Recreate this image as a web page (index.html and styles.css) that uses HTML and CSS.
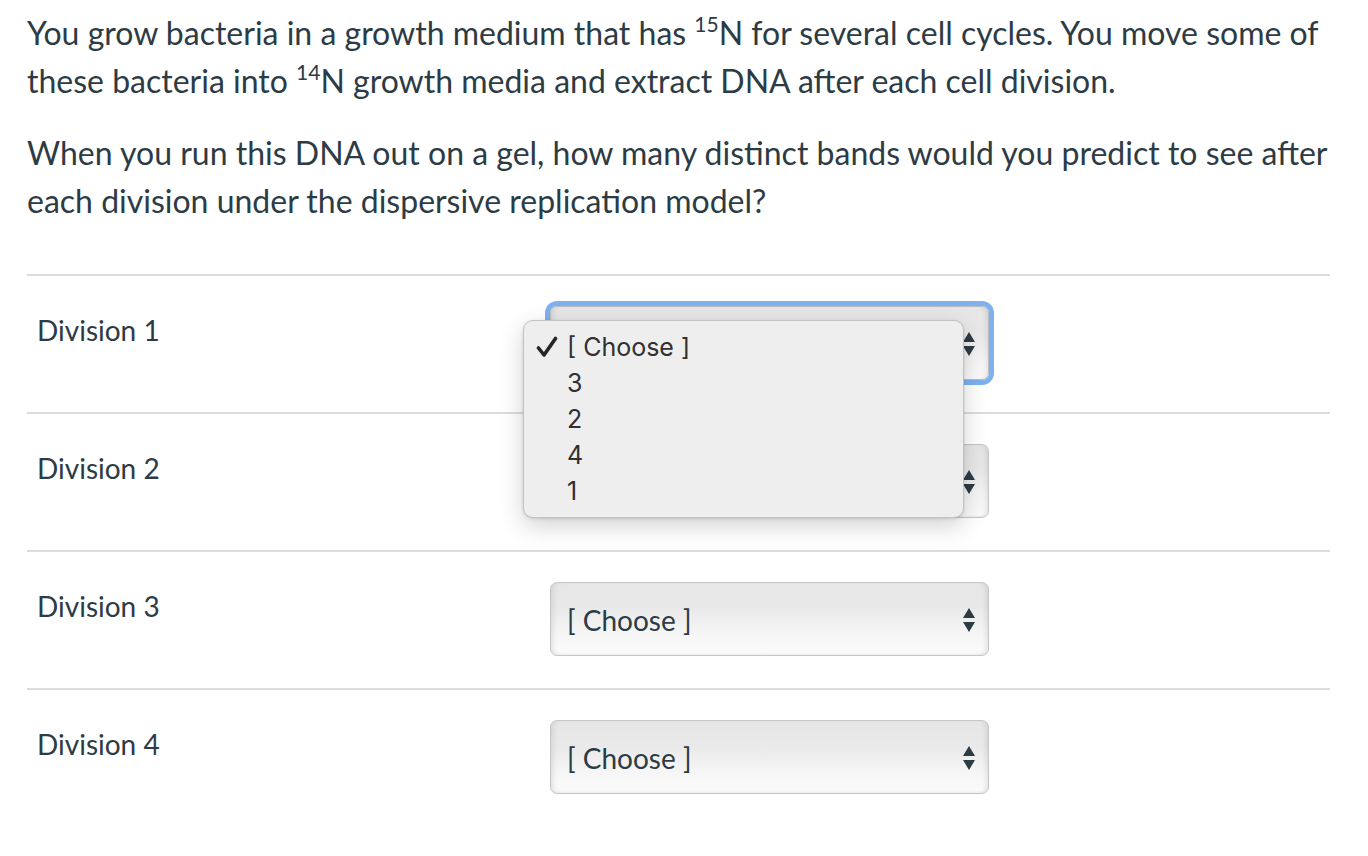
FILE: index.html
```html
<!DOCTYPE html>
<html lang="en">
  <head>
    <meta charset="UTF-8" />
    <meta name="viewport" content="width=device-width, initial-scale=1.0" />
    <title>Question</title>
    <link rel="stylesheet" href="styles.css">
  </head>
  <body>
    <div class="question">
      <div class="question-text">
        <p>
          You grow bacteria in a growth medium that has <sup>15</sup>N for several cell cycles. You move some of
          these bacteria into <sup>14</sup>N growth media and extract DNA after each cell division.
        </p>
        <p>
          When you run this DNA out on a gel, how many distinct bands would you predict to see after
          each division under the dispersive replication model?
        </p>
      </div>

      <div class="answers">
        <div class="answer-row">
          <div class="answer-label">Division 1</div>
          <div class="answer-field">
            <div class="select focused">
              <span class="select-value">[ Choose ]</span>
              <span class="select-arrows"><i class="up"></i><i class="down"></i></span>
            </div>
            <!-- open option list of the first select -->
            <ul class="popup">
              <li class="checked">
                <svg class="check" viewBox="0 0 22 22" width="22" height="22">
                  <path d="M2.5 12 L8 19 L19.5 2.5" fill="none" stroke="#262626" stroke-width="3.6" stroke-linecap="round" stroke-linejoin="round" />
                </svg>
                [ Choose ]
              </li>
              <li>3</li>
              <li>2</li>
              <li>4</li>
              <li>1</li>
            </ul>
          </div>
        </div>

        <div class="answer-row">
          <div class="answer-label">Division 2</div>
          <div class="answer-field">
            <div class="select">
              <span class="select-value">[ Choose ]</span>
              <span class="select-arrows"><i class="up"></i><i class="down"></i></span>
            </div>
          </div>
        </div>

        <div class="answer-row">
          <div class="answer-label">Division 3</div>
          <div class="answer-field">
            <div class="select">
              <span class="select-value">[ Choose ]</span>
              <span class="select-arrows"><i class="up"></i><i class="down"></i></span>
            </div>
          </div>
        </div>

        <div class="answer-row">
          <div class="answer-label">Division 4</div>
          <div class="answer-field">
            <div class="select">
              <span class="select-value">[ Choose ]</span>
              <span class="select-arrows"><i class="up"></i><i class="down"></i></span>
            </div>
          </div>
        </div>
      </div>
    </div>
  </body>
</html>
```

FILE: styles.css
```css
body {
  margin: 0;
  padding: 0;
  background: #fff;
  color: #2d3b45;
  font-family: "Lato", "Liberation Sans", sans-serif;
}

.question {
  padding: 9px 38px 0 27px;
}

.question-text {
  margin-right: -12px;
}

.question-text p {
  margin: 0 0 24px;
  font-size: 32px;
  line-height: 48px;
}

.question-text sup {
  font-size: 21px;
  line-height: 1;
  vertical-align: 0;
  position: relative;
  top: -13px;
}

.answers {
  margin-top: 49px;
}

.answer-row {
  display: grid;
  grid-template-columns: 523px 439px 1fr;
  border-top: 2px solid #dcdcdc;
  padding: 30px 0 32px;
}

.answer-label {
  padding: 6px 0 0 10px;
  font-size: 28px;
  line-height: 36px;
}

.answer-field {
  position: relative;
}

.select {
  box-sizing: border-box;
  height: 74px;
  display: flex;
  align-items: center;
  justify-content: space-between;
  padding: 2px 13px 0 16px;
  border: 1.5px solid #c6c6c6;
  border-radius: 7px;
  background: linear-gradient(#e6e6e6 0%, #e9e9e9 35%, #f6f6f6 72%, #fbfbfb 100%);
  box-shadow: inset 6px 0 6px -5px rgba(0, 0, 0, 0.12),
    inset -6px 0 6px -5px rgba(0, 0, 0, 0.12),
    inset 0 -3px 3px -2px rgba(0, 0, 0, 0.06);
}

.select.focused {
  box-shadow: 0 0 0 5px #7eb1ef,
    inset 6px 0 6px -5px rgba(0, 0, 0, 0.12),
    inset -6px 0 6px -5px rgba(0, 0, 0, 0.12);
  border-color: #bdbdbd;
}

.select-value {
  font-size: 28px;
}

.select-arrows {
  display: flex;
  flex-direction: column;
  gap: 4px;
}

.select-arrows i {
  display: block;
  width: 0;
  height: 0;
  border-left: 6px solid transparent;
  border-right: 6px solid transparent;
}

.select-arrows .up {
  border-bottom: 10px solid #2d3b45;
}

.select-arrows .down {
  border-top: 10px solid #2d3b45;
}

/* native option list drawn over the rows */
.popup {
  position: absolute;
  left: -27px;
  top: 14px;
  z-index: 2;
  box-sizing: border-box;
  width: 441px;
  height: 198px;
  margin: 0;
  padding: 8px 0 0;
  list-style: none;
  background: #eeeeef;
  border: 1px solid #c2c2c2;
  border-radius: 10px;
  box-shadow: 0 8px 24px rgba(0, 0, 0, 0.18), 0 1px 3px rgba(0, 0, 0, 0.12);
  font-family: "Inter", "Liberation Sans", sans-serif;
  font-size: 25px;
  color: #303030;
}

.popup li {
  height: 36px;
  line-height: 36px;
  padding-left: 43px;
  position: relative;
}

.popup .check {
  position: absolute;
  left: 12px;
  top: 7px;
}
```
